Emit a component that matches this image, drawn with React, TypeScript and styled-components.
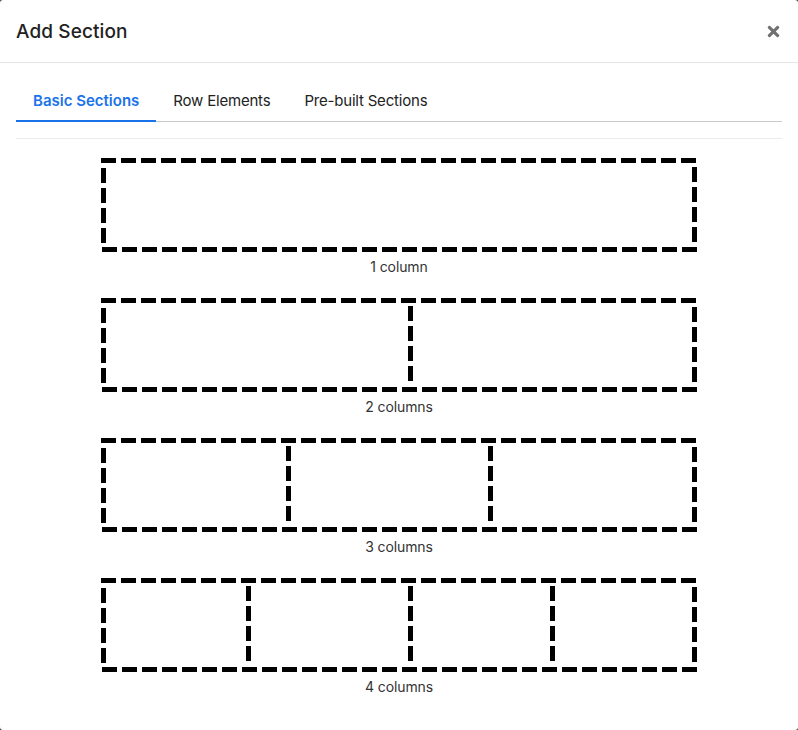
import React, { useState } from 'react';
import styled, { createGlobalStyle } from 'styled-components';
import { FaTimes } from 'react-icons/fa';

const GlobalStyle = createGlobalStyle`
  html, body {
    margin: 0;
    padding: 0;
    background: #2f4a24;
  }
  body {
    font-family: Inter, "Noto Sans", "Liberation Sans", sans-serif;
    color: #212529;
  }
  * {
    box-sizing: border-box;
  }
`;

const Modal = styled.div`
  width: 798px;
  height: 730px;
  background: white;
  border-radius: 3px;
  overflow: hidden;
`;

const Header = styled.div`
  display: flex;
  align-items: center;
  justify-content: space-between;
  height: 63px;
  padding: 1px 16px 0;
  border-bottom: 1px solid #e3e5e8;
`;

const Title = styled.h5`
  margin: 0;
  font-size: 19px;
  font-weight: 500;
  color: #222;
  line-height: 30px;
  letter-spacing: 0.1px;
`;

const Close = styled.button`
  border: none;
  background: none;
  padding: 0;
  display: flex;
  color: #717171;
  cursor: pointer;
`;

const Body = styled.div`
  padding: 16px;
`;

const TabBar = styled.div`
  display: flex;
  border-bottom: 1px solid #c9c9c9;
`;

const Tab = styled.button<{ $active?: boolean }>`
  border: none;
  background: none;
  font-family: inherit;
  font-size: 15px;
  line-height: 22px;
  letter-spacing: ${(p) => (p.$active ? '0' : '-0.2px')};
  padding: 11px 17px 8px;
  margin-bottom: -1px;
  color: ${(p) => (p.$active ? '#1a73e8' : '#222')};
  font-weight: ${(p) => (p.$active ? 600 : 400)};
  border-bottom: 2px solid ${(p) => (p.$active ? '#1a73e8' : 'transparent')};
  cursor: pointer;
`;

const Divider = styled.hr`
  margin: 16px 0 0;
  border: none;
  border-top: 1px solid #e9ecef;
`;

const LayoutList = styled.div`
  display: flex;
  flex-direction: column;
  align-items: center;
  padding-top: 19px;
`;

const LayoutItem = styled.div`
  display: flex;
  flex-direction: column;
  align-items: center;
  margin-bottom: 21px;
  cursor: pointer;
`;

const Thumb = styled.svg`
  display: block;
  margin-left: -1px;
`;

const Label = styled.div`
  margin-top: 5px;
  font-size: 14px;
  line-height: 20px;
  color: #333;
  letter-spacing: -0.1px;
`;

const W = 596;
const H = 94;

function LayoutThumb({ dividers }: { dividers: number[] }) {
  const dash = { stroke: '#000', strokeWidth: 5, strokeDasharray: '15 5' };
  return (
    <Thumb width={W} height={H} viewBox={`0 0 ${W} ${H}`}>
      <line x1={0} y1={2.5} x2={W} y2={2.5} {...dash} />
      <line x1={1} y1={H - 2.5} x2={W} y2={H - 2.5} {...dash} />
      <line x1={2.5} y1={10} x2={2.5} y2={85} {...dash} />
      <line x1={W - 2.5} y1={9} x2={W - 2.5} y2={84} {...dash} />
      {dividers.map((x) => (
        <line key={x} x1={x + 2.5} y1={8} x2={x + 2.5} y2={83} {...dash} />
      ))}
    </Thumb>
  );
}

const layouts = [
  { label: '1 column', dividers: [] as number[] },
  { label: '2 columns', dividers: [307] },
  { label: '3 columns', dividers: [185, 387] },
  { label: '4 columns', dividers: [145, 307, 449] },
];

const tabs = ['Basic Sections', 'Row Elements', 'Pre-built Sections'];

export default function App() {
  const [active, setActive] = useState(0);
  return (
    <>
      <GlobalStyle />
      <Modal>
        <Header>
          <Title>Add Section</Title>
          <Close aria-label="Close">
            <FaTimes size={17} />
          </Close>
        </Header>
        <Body>
          <TabBar>
            {tabs.map((t, i) => (
              <Tab key={t} $active={i === active} onClick={() => setActive(i)}>
                {t}
              </Tab>
            ))}
          </TabBar>
          <Divider />
          <LayoutList>
            {layouts.map((l) => (
              <LayoutItem key={l.label}>
                <LayoutThumb dividers={l.dividers} />
                <Label>{l.label}</Label>
              </LayoutItem>
            ))}
          </LayoutList>
        </Body>
      </Modal>
    </>
  );
}
